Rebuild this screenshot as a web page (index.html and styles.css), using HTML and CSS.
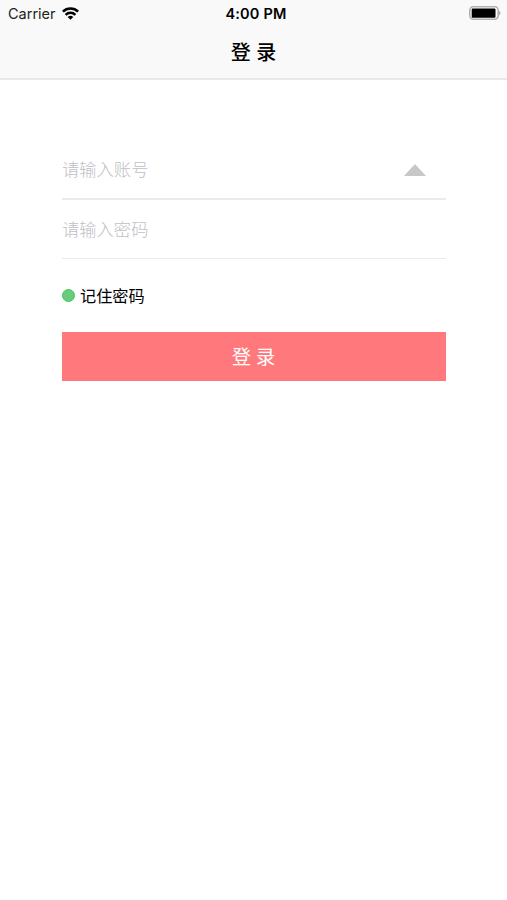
FILE: index.html
```html
<!DOCTYPE html>
<html lang="zh-CN">
<head>
<meta charset="utf-8">
<title>登录</title>
<link rel="stylesheet" href="styles.css">
</head>
<body>
<header class="top">
  <div class="status">
    <div class="carrier"><span>Carrier</span>
      <svg class="wifi" width="17" height="13" viewBox="0 0 17 13"><g fill="none" stroke="#000" stroke-width="2.5"><path d="M.9 4.6a10.8 10.8 0 0 1 15.2 0"/><path d="M3.6 7.8a7 7 0 0 1 9.8 0"/></g><path d="M8.5 12.8 5.7 10a4 4 0 0 1 5.6 0z"/></svg>
    </div>
    <div class="time">4:00 PM</div>
    <svg class="battery" width="32" height="14" viewBox="0 0 32 14"><rect x=".8" y=".8" width="28.4" height="12.4" rx="3.6" fill="#fff" stroke="#b0b0b0" stroke-width="1.6"/><rect x="2.7" y="2.5" width="23.8" height="9.3" rx="1"/><path d="M30.2 4.7q2.4 2.3 0 4.6z" fill="#999"/></svg>
  </div>
  <h1 class="title">登 录</h1>
</header>
<main class="form">
  <label class="field account"><input type="text" placeholder="请输入账号"><svg class="arrow" width="22" height="12" viewBox="0 0 22 12"><path d="M0 12 11 0l11 12z" fill="#c7c7c7"/></svg></label>
  <label class="field password"><input type="password" placeholder="请输入密码"></label>
  <div class="remember"><span class="dot"></span><span>记住密码</span></div>
  <button class="submit" type="button">登 录</button>
</main>
</body>
</html>
```
FILE: styles.css
```css
* { box-sizing: border-box; }
body { margin: 0; background: #fff; color: #000; font-family: Inter, "Noto Sans CJK SC", sans-serif; }
.top { height: 80px; background: #f9f9f9; border-bottom: 2px solid #e9e9e9; }
.status { display: grid; grid-template-columns: 1fr auto 1fr; align-items: center; height: 27px; padding: 0 6px 0 8px; }
.carrier { display: flex; align-items: center; gap: 6px; color: #222; font-size: 14.5px; }
.wifi { margin-top: -1px; }
.time { padding-left: 3px; font-size: 14.5px; font-weight: 600; letter-spacing: .2px; }
.battery { justify-self: end; margin-top: -1px; }
.title { margin: 11px 0 0; font-size: 20px; line-height: 30px; font-weight: 500; text-align: center; }
.form { padding: 60px 61px 0 62px; }
.field { display: flex; align-items: center; height: 60px; border-bottom: 2px solid #ebebeb; }
.password { height: 59px; border-bottom-width: 1px; }
.field input { flex: 1; min-width: 0; padding: 0 0 2px; border: 0; outline: 0; background: none; font: 300 17.3px "Noto Sans CJK SC", sans-serif; }
.field input::placeholder { color: #bebec4; opacity: 1; }
.arrow { margin-right: 20px; margin-top: 2px; }
.remember { display: flex; align-items: center; gap: 5px; height: 73px; padding-bottom: 2px; font-size: 16.2px; }
.dot { width: 13px; height: 13px; margin-top: 1px; border: 1px solid #35cf58; border-radius: 50%; background: #6bcb7c; }
.submit { display: block; width: 100%; height: 49px; padding: 0 1px 2px 0; border: 0; background: #ff787b; color: #fff; font: 19.5px "Noto Sans CJK SC", sans-serif; }
```
